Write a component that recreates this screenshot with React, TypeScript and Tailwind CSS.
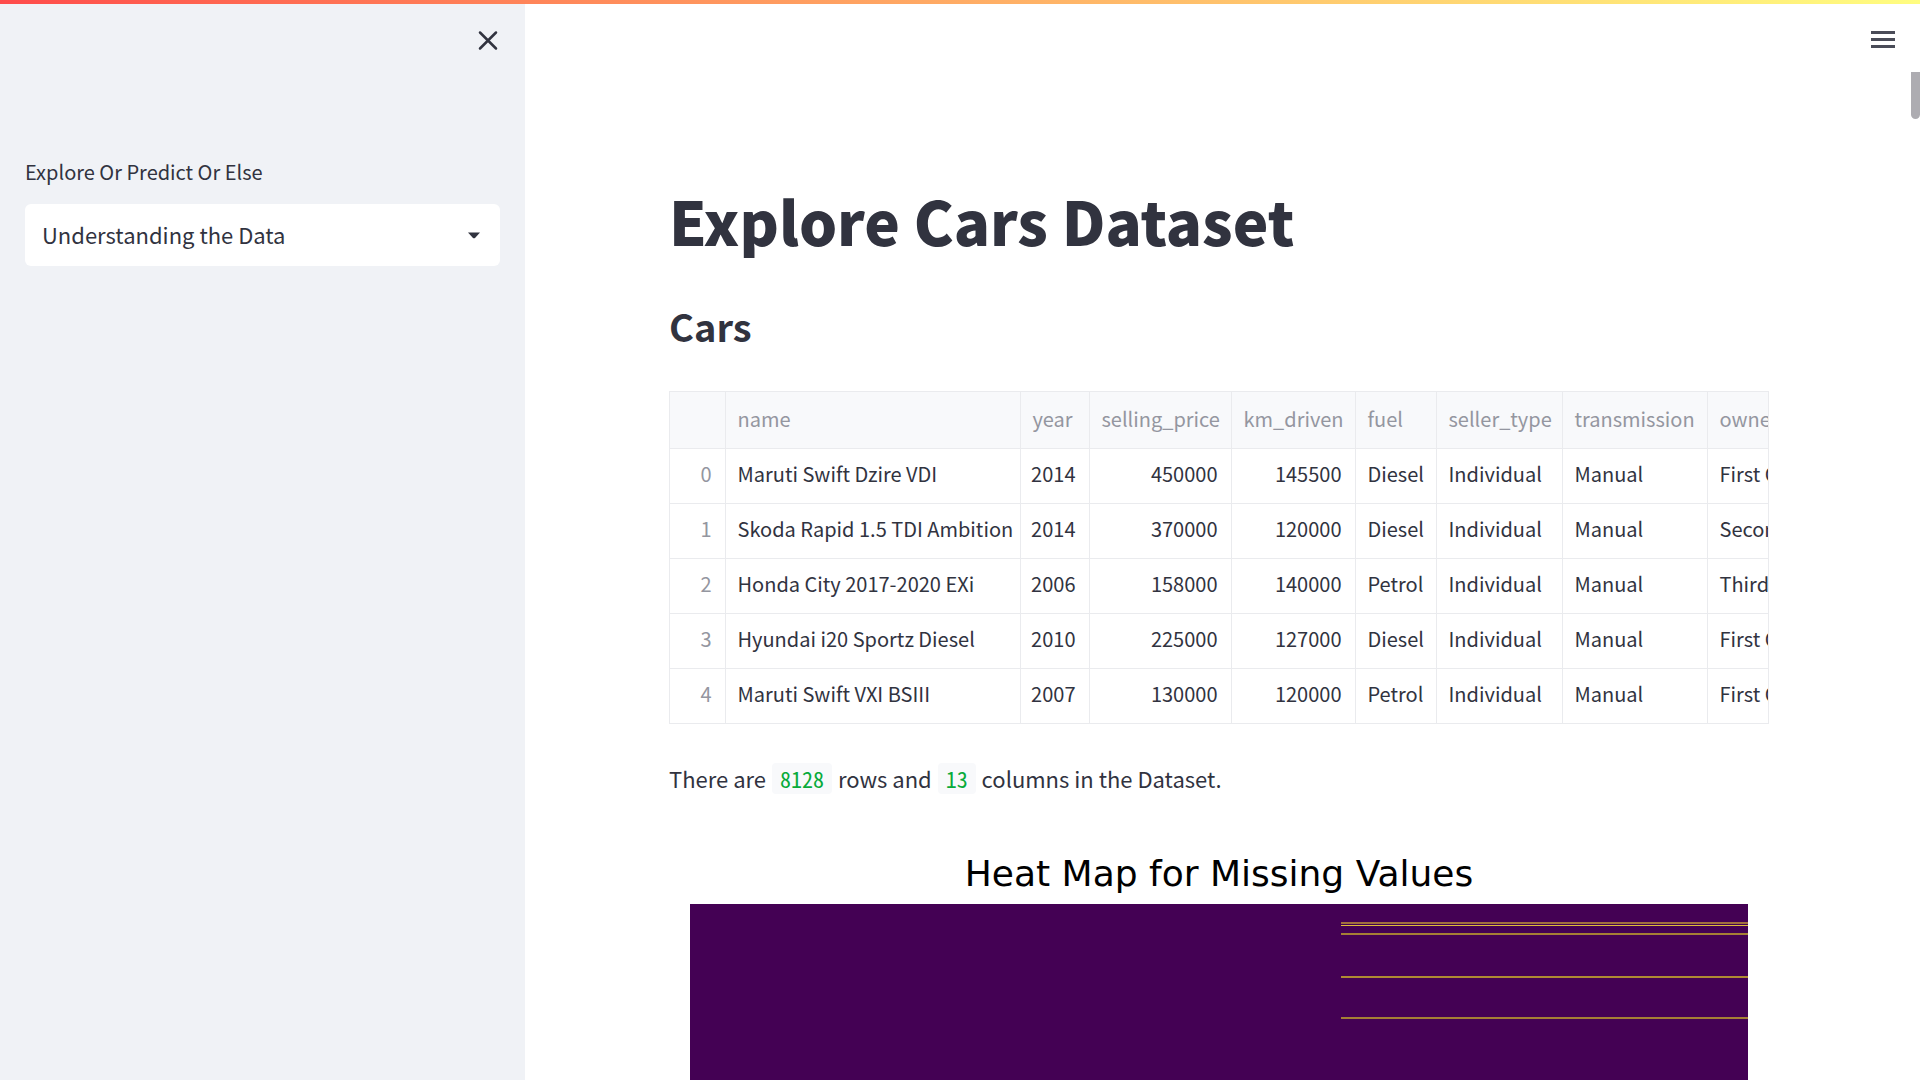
import { useState } from "react";

const columns = [
  { label: "", align: "right", width: 55 },
  { label: "name", align: "left", width: 295 },
  { label: "year", align: "right", width: 69 },
  { label: "selling_price", align: "right", width: 142 },
  { label: "km_driven", align: "right", width: 124 },
  { label: "fuel", align: "left", width: 81 },
  { label: "seller_type", align: "left", width: 126 },
  { label: "transmission", align: "left", width: 145 },
  { label: "owner", align: "left", width: 160 },
];

const rows = [
  ["0", "Maruti Swift Dzire VDI", "2014", "450000", "145500", "Diesel", "Individual", "Manual", "First Owner"],
  ["1", "Skoda Rapid 1.5 TDI Ambition", "2014", "370000", "120000", "Diesel", "Individual", "Manual", "Second Owner"],
  ["2", "Honda City 2017-2020 EXi", "2006", "158000", "140000", "Petrol", "Individual", "Manual", "Third Owner"],
  ["3", "Hyundai i20 Sportz Diesel", "2010", "225000", "127000", "Diesel", "Individual", "Manual", "First Owner"],
  ["4", "Maruti Swift VXI BSIII", "2007", "130000", "120000", "Petrol", "Individual", "Manual", "First Owner"],
];

const missing = [
  { y: 18, h: 2, fill: "#a1703e" },
  { y: 21, h: 1, fill: "#e0bd3a" },
  { y: 29, h: 2, fill: "#a67f35" },
  { y: 72, h: 2, fill: "#b08a33" },
  { y: 113, h: 2, fill: "#a67f35" },
];

function Sidebar() {
  const [page, setPage] = useState("Understanding the Data");
  return (
    <aside className="flex w-[525px] shrink-0 flex-col bg-[#f0f2f6] px-[25px] pt-6">
      <div className="flex justify-end">
        <button type="button" aria-label="Close sidebar" className="flex size-6 items-center justify-center text-[#31333f]">
          <svg viewBox="0 0 24 24" className="size-6" fill="none" stroke="currentColor" strokeWidth="2.5" strokeLinecap="round">
            <path d="M4 4.5 20 20.5M20 4.5 4 20.5" />
          </svg>
        </button>
      </div>
      <label htmlFor="page" className="mt-[104px] text-[20px] leading-8 text-[#31333f]">
        Explore Or Predict Or Else
      </label>
      <div className="relative mt-4">
        <select
          id="page"
          value={page}
          onChange={(e) => setPage(e.target.value)}
          className="h-[62px] w-full appearance-none rounded-md bg-white pb-[2px] pl-[17px] pr-12 text-[22px] text-[#31333f]"
        >
          <option>Understanding the Data</option>
        </select>
        <svg viewBox="0 0 12 6" className="pointer-events-none absolute right-5 top-7 h-[7px] w-3 text-[#31333f]" fill="currentColor">
          <path d="M0 0h12L7 5.4Q6 6.3 5 5.4Z" />
        </svg>
      </div>
    </aside>
  );
}

function CarsTable() {
  return (
    <div className="mt-10 overflow-hidden border border-[#eaebee]">
      <table className="w-[1197px] table-fixed border-collapse text-[20px] leading-6 text-[#31333f]">
        <colgroup>
          {columns.map((c) => (
            <col key={c.label} style={{ width: c.width }} />
          ))}
        </colgroup>
        <thead>
          <tr className="h-14 bg-[#f8f9fb] text-[#9496a0]">
            {columns.map((c) => (
              <th key={c.label} className="border-b border-r border-[#eaebee] pb-[2px] pl-3 text-left font-normal">
                {c.label}
              </th>
            ))}
          </tr>
        </thead>
        <tbody>
          {rows.map((r) => (
            <tr key={r[0]} className="h-[55px] border-b border-[#eaebee] last:border-b-0">
              {r.map((v, i) => (
                <td
                  key={i}
                  className={`whitespace-nowrap border-r border-[#eaebee] pb-1 ${columns[i].align === "right" ? "pr-[13px] text-right" : "pl-3 text-left"} ${i === 0 ? "text-[#9496a0]" : ""}`}
                >
                  {v}
                </td>
              ))}
            </tr>
          ))}
        </tbody>
      </table>
    </div>
  );
}

function Code({ children }: { children: string }) {
  return (
    <code className="mx-px inline-block rounded bg-[#f8f9fb] px-2 font-['Noto_Sans_Mono_CJK_SC','DejaVu_Sans_Mono',monospace] text-[22px] leading-[31px] text-[#09ab3b]">
      {children}
    </code>
  );
}

function HeatMap() {
  return (
    <figure className="mt-14 flex flex-col px-[21px]">
      <figcaption className="text-center font-['DejaVu_Sans',sans-serif] text-[36px] leading-[44px] text-black">
        Heat Map for Missing Values
      </figcaption>
      <svg viewBox="0 0 1058 400" className="mt-2 w-full" aria-hidden="true" shapeRendering="crispEdges">
        <rect width="1058" height="400" fill="#440154" />
        {missing.map((m) => (
          <rect key={m.y} x="651" y={m.y} width="407" height={m.h} fill={m.fill} />
        ))}
      </svg>
    </figure>
  );
}

export default function App() {
  return (
    <div className="flex h-screen flex-col overflow-hidden bg-white font-['Noto_Sans_CJK_SC',sans-serif] text-[#31333f]">
      <div className="h-1 shrink-0 bg-linear-to-r from-[#ff4b4b] to-[#fffd80]" />
      <div className="flex min-h-0 flex-1">
        <Sidebar />
        <main className="relative min-w-0 flex-1 overflow-hidden pr-[7px]">
          <button type="button" aria-label="Menu" className="absolute right-[25px] top-[27px] flex w-6 flex-col gap-1">
            <span className="h-[3px] w-full bg-[#4a4c58]" />
            <span className="h-[3px] w-full bg-[#4a4c58]" />
            <span className="h-[3px] w-full bg-[#4a4c58]" />
          </button>
          <div className="absolute right-0 top-[68px] h-[47px] w-[9px] rounded-b-full bg-[#adacb1]" />
          <div className="mx-auto w-full max-w-[1100px] pt-[176px]">
            <h1 className="text-[60px] font-black leading-[80px]">Explore Cars Dataset</h1>
            <h2 className="mt-[41px] text-[38px] font-bold leading-[50px]">Cars</h2>
            <CarsTable />
            <p className="mt-9 text-[22px] leading-9">
              There are <Code>8128</Code> rows and <Code>13</Code> columns in the Dataset.
            </p>
            <HeatMap />
          </div>
        </main>
      </div>
    </div>
  );
}
